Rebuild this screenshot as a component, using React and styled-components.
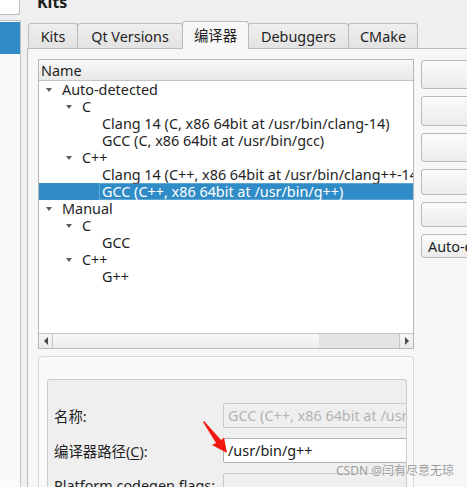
import React from "react";
import styled, { createGlobalStyle, css } from "styled-components";

const GlobalStyle = createGlobalStyle`
  html, body { margin: 0; padding: 0; background: #efefef; }
  body {
    font-family: "Noto Sans", "Noto Sans CJK SC", sans-serif;
    font-size: 14.4px;
    color: #1f1f1f;
    overflow: hidden;
  }
  * { box-sizing: border-box; }
`;

const Window = styled.div`
  position: relative;
  width: 467px;
  height: 487px;
  overflow: hidden;
  display: flex;
  background: #efefef;
`;

const Side = styled.div`
  width: 21px;
  flex: none;
  display: flex;
  flex-direction: column;
`;

const SearchBox = styled.div`
  height: 15px;
  width: 20px;
  background: #ffffff;
  border: 1px solid #bdbdbd;
  border-top: none;
  border-left: none;
  border-bottom-right-radius: 3px;
`;

const SideList = styled.div`
  flex: 1;
  margin-top: 5px;
  background: #fafafa;
  border-top: 1px solid #c4c4c4;
  border-right: 1px solid #c4c4c4;
  padding-top: 1px;
`;

const SideItem = styled.div`
  height: 32px;
  background: #308cc6;
`;

const Main = styled.div`
  flex: 1;
  display: flex;
  flex-direction: column;
  padding-left: 6px;
  min-width: 0;
`;

const Title = styled.div`
  height: 27px;
  margin-top: -6px;
  padding-left: 10px;
  font-size: 16px;
  line-height: 16px;
  font-weight: bold;
  color: #1c1c1c;
`;

const TabBar = styled.div`
  display: flex;
  align-items: flex-end;
  height: 27px;
  padding-left: 1px;
  position: relative;
  z-index: 1;
`;

const Tab = styled.div`
  width: ${(p) => p.$w}px;
  height: 25px;
  margin-left: -1px;
  display: flex;
  align-items: center;
  justify-content: center;
  border: 1px solid #bcbcbc;
  border-bottom: none;
  border-radius: 3px 3px 0 0;
  background: linear-gradient(#eeeeee, #e3e3e3);
  color: #1f1f1f;
  white-space: nowrap;
  &:first-child { margin-left: 0; }
  ${(p) =>
    p.$active &&
    css`
      height: 28px;
      margin-bottom: -1px;
      padding-bottom: 2px;
      background: #f7f7f7;
    `}
`;

const Pane = styled.div`
  flex: 1;
  display: flex;
  gap: 7px;
  padding: 10px 0 0 10px;
  background: #f7f7f7;
  border-left: 1px solid #bcbcbc;
  border-top: 1px solid #bcbcbc;
  min-height: 0;
`;

const LeftCol = styled.div`
  width: 376px;
  flex: none;
  display: flex;
  flex-direction: column;
  gap: 7px;
`;

const Tree = styled.div`
  height: 290px;
  flex: none;
  display: flex;
  flex-direction: column;
  background: #ffffff;
  border: 1px solid #b8b8b8;
  overflow: hidden;
`;

const Header = styled.div`
  height: 21px;
  flex: none;
  padding-left: 2px;
  display: flex;
  align-items: center;
  background: linear-gradient(#f7f7f7, #e9e9e9);
  border-bottom: 1px solid #c4c4c4;
  color: #1f1f1f;
`;

const Rows = styled.div`
  flex: 1;
  overflow: hidden;
`;

const Row = styled.div`
  height: 17px;
  display: flex;
  align-items: center;
  padding-left: ${(p) => p.$depth * 20}px;
  white-space: nowrap;
  color: #1f1f1f;
  ${(p) =>
    p.$selected &&
    css`
      background: #308cc6;
      color: #ffffff;
    `}
`;

const Expander = styled.span`
  width: 23px;
  flex: none;
  display: flex;
  justify-content: center;
  padding-right: 3px;
  &::before {
    content: "";
    display: ${(p) => (p.$show ? "block" : "none")};
    width: 0;
    height: 0;
    border-left: 3.5px solid transparent;
    border-right: 3.5px solid transparent;
    border-top: 4px solid #5c5c5c;
  }
`;

const Cell = styled.span`
  display: flex;
  align-items: center;
  height: 17px;
  ${(p) =>
    p.$focus &&
    css`
      margin-left: -3px;
      padding-left: 2px;
      flex: 1;
      border: 1px solid rgba(255, 255, 255, 0.22);
      border-right: none;
    `}
`;

const HScroll = styled.div`
  height: 15px;
  flex: none;
  display: flex;
  border-top: 1px solid #c6c6c6;
  background: #e4e4e4;
`;

const ScrollBtn = styled.div`
  width: 14px;
  flex: none;
  display: flex;
  align-items: center;
  justify-content: center;
  background: linear-gradient(#f6f6f6, #e9e9e9);
  ${(p) => (p.$dir === "left" ? "border-right" : "border-left")}: 1px solid #c6c6c6;
  &::before {
    content: "";
    width: 0;
    height: 0;
    border-top: 4px solid transparent;
    border-bottom: 4px solid transparent;
    ${(p) =>
      p.$dir === "left"
        ? "border-right: 4px solid #4a4a4a;"
        : "border-left: 4px solid #4a4a4a;"}
  }
`;

const ScrollHandle = styled.div`
  width: 266px;
  flex: none;
  background: linear-gradient(#f8f8f8, #ececec);
`;

const ScrollTrack = styled.div`
  flex: 1;
`;

const Details = styled.div`
  flex: 1;
  display: flex;
  flex-direction: column;
  padding: 22px 6px 0 8px;
  background: #f9f9f9;
  border: 1px solid #d8d8d8;
  border-bottom: none;
  border-radius: 4px 4px 0 0;
  min-height: 0;
`;

const Inner = styled.div`
  flex: 1;
  overflow: hidden;
  background: #efefef;
  border: 1px solid #cbcbcb;
  border-bottom: none;
  border-radius: 3px 3px 0 0;
  padding: 23px 0 0 6px;
`;

const Form = styled.div`
  display: grid;
  grid-template-columns: 169px 300px;
  row-gap: 10px;
  align-items: center;
`;

const Label = styled.div`
  white-space: nowrap;
  color: #1f1f1f;
  u { text-decoration-thickness: 1px; text-underline-offset: 2px; }
`;

const Field = styled.div`
  height: 25px;
  display: flex;
  align-items: center;
  padding-left: 4px;
  border: 1px solid ${(p) => (p.$enabled ? "#b3b3b3" : "#c9c9c9")};
  border-radius: 2px;
  background: ${(p) => (p.$enabled ? "#ffffff" : "#efefef")};
  color: ${(p) => (p.$enabled ? "#1a1a1a" : "#b3b3b3")};
  white-space: nowrap;
  overflow: hidden;
`;

const ButtonCol = styled.div`
  display: flex;
  flex-direction: column;
  gap: 7px;
  padding-top: 1px;
  flex: none;
`;

const Button = styled.div`
  width: 100px;
  height: ${(p) => p.$h}px;
  display: flex;
  align-items: center;
  padding-left: 6px;
  border: 1px solid #b9b9b9;
  border-radius: 3px;
  background: linear-gradient(#fbfbfb, #ececec);
  color: #1f1f1f;
  white-space: nowrap;
`;

const Annotation = styled.svg`
  position: absolute;
  left: 200px;
  top: 418px;
  overflow: visible;
`;

const Watermark = styled.div`
  position: absolute;
  left: 336px;
  top: 463px;
  font-size: 12px;
  line-height: 16px;
  color: #9a9a9a;
  white-space: nowrap;
  text-shadow: 0 0 1px #ffffff;
`;

const rows = [
  { depth: 0, label: "Auto-detected", expand: true },
  { depth: 1, label: "C", expand: true },
  { depth: 2, label: "Clang 14 (C, x86 64bit at /usr/bin/clang-14)" },
  { depth: 2, label: "GCC (C, x86 64bit at /usr/bin/gcc)" },
  { depth: 1, label: "C++", expand: true },
  { depth: 2, label: "Clang 14 (C++, x86 64bit at /usr/bin/clang++-14)" },
  { depth: 2, label: "GCC (C++, x86 64bit at /usr/bin/g++)", selected: true },
  { depth: 0, label: "Manual", expand: true },
  { depth: 1, label: "C", expand: true },
  { depth: 2, label: "GCC" },
  { depth: 1, label: "C++", expand: true },
  { depth: 2, label: "G++" },
];

const tabs = [
  { label: "Kits", w: 50 },
  { label: "Qt Versions", w: 106 },
  { label: "编译器", w: 67, active: true },
  { label: "Debuggers", w: 101 },
  { label: "CMake", w: 70 },
];

const buttons = [
  { h: 29 },
  { h: 30 },
  { h: 29 },
  { h: 26 },
  { h: 25 },
  { h: 24, label: "Auto-detect" },
];

export default function App() {
  return (
    <>
      <GlobalStyle />
      <Window>
        <Side>
          <SearchBox />
          <SideList>
            <SideItem />
          </SideList>
        </Side>
        <Main>
          <Title>Kits</Title>
          <TabBar>
            {tabs.map((t) => (
              <Tab key={t.label} $w={t.w} $active={t.active}>
                {t.label}
              </Tab>
            ))}
          </TabBar>
          <Pane>
            <LeftCol>
              <Tree>
                <Header>Name</Header>
                <Rows>
                  {rows.map((r, i) => (
                    <Row key={i} $depth={r.depth} $selected={r.selected}>
                      <Expander $show={r.expand} />
                      <Cell $focus={r.selected}>{r.label}</Cell>
                    </Row>
                  ))}
                </Rows>
                <HScroll>
                  <ScrollBtn $dir="left" />
                  <ScrollHandle />
                  <ScrollTrack />
                  <ScrollBtn $dir="right" />
                </HScroll>
              </Tree>
              <Details>
                <Inner>
                  <Form>
                    <Label>名称:</Label>
                    <Field>GCC (C++, x86 64bit at /usr/bin/g++)</Field>
                    <Label>
                      编译器路径(<u>C</u>):
                    </Label>
                    <Field $enabled>/usr/bin/g++</Field>
                    <Label>Platform codegen flags:</Label>
                    <Field />
                  </Form>
                </Inner>
              </Details>
            </LeftCol>
            <ButtonCol>
              {buttons.map((b, i) => (
                <Button key={i} $h={b.h}>
                  {b.label}
                </Button>
              ))}
            </ButtonCol>
          </Pane>
        </Main>
        <Annotation width="30" height="36" viewBox="0 0 30 36">
          <polygon
            points="4,3 21,22 24,19.5 27,35 12,27 16,25 3,4"
            fill="#f0190f"
          />
        </Annotation>
        <Watermark>CSDN @闫有尽意无琼</Watermark>
      </Window>
    </>
  );
}
